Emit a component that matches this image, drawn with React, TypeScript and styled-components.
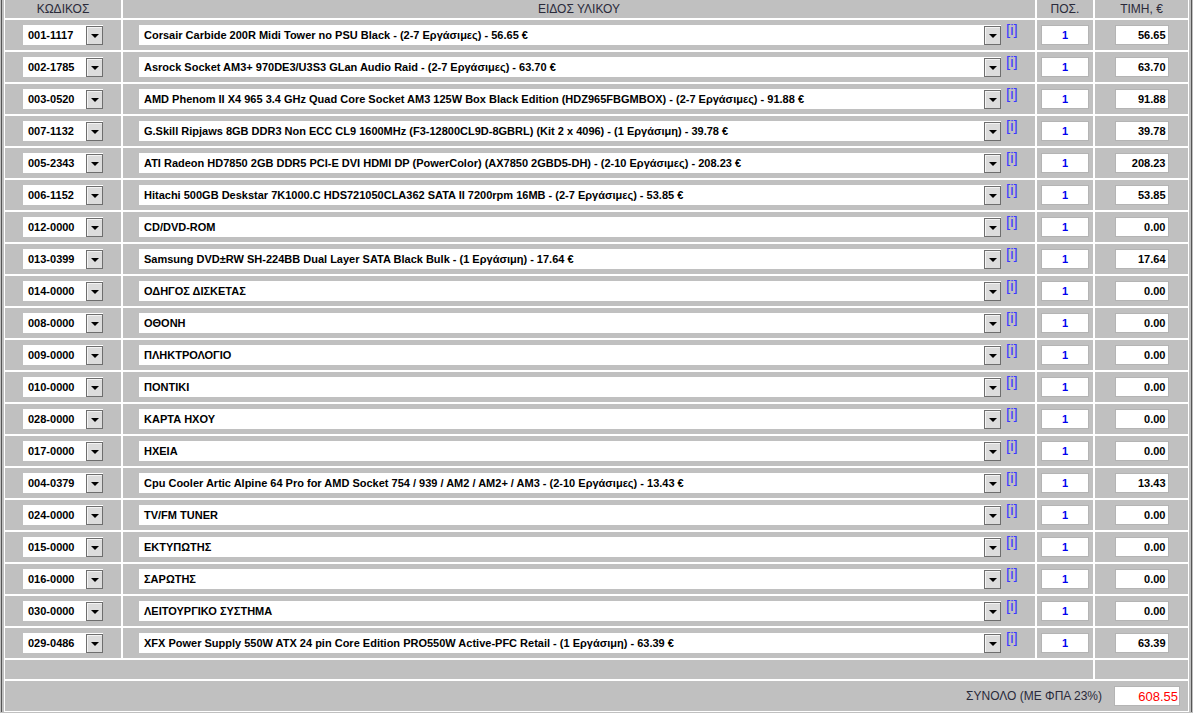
import React from "react";
import styled, { createGlobalStyle } from "styled-components";

const Global = createGlobalStyle`
  html, body { margin: 0; padding: 0; background: #c0c0c0; }
  body { font-family: "Liberation Sans", Arial, sans-serif; overflow: hidden; }
`;

const Frame = styled.div`
  margin: 0 1px;
  border-left: 1px solid #555;
  border-right: 1px solid #555;
  padding: 0 2px 1px 2px;
  height: 713px;
  box-sizing: border-box;
`;

const Table = styled.div`
  margin-top: -1px;
  background: #fff;
  padding: 1px;
  display: grid;
  grid-template-columns: 116px 912px 56px 93px;
  grid-template-rows: 18px repeat(20, 30px) 19px 30px;
  gap: 2px;
`;

const Cell = styled.div<{ $span?: number; $align?: string }>`
  background: #c0c0c0;
  display: flex;
  align-items: center;
  justify-content: ${(p) => p.$align || "center"};
  grid-column: span ${(p) => p.$span || 1};
  min-width: 0;
`;

const HeadCell = styled(Cell)`
  font-size: 12px;
  color: #2a2a3a;
`;

const Field = styled.div<{ $w: number }>`
  width: ${(p) => p.$w}px;
  height: 20px;
  background: #fff;
  display: flex;
  align-items: center;
  box-sizing: border-box;
  position: relative;
  font-size: 11px;
  font-weight: bold;
  color: #000;
  white-space: nowrap;
  overflow: hidden;
  flex: none;
`;

const FieldText = styled.span`
  padding-left: 5px;
  flex: 1;
  overflow: hidden;
`;

const DropBtn = styled.div`
  width: 17px;
  height: 19px;
  box-sizing: border-box;
  border: 1px solid #6e6e6e;
  background: #dcdcdc;
  box-shadow: inset 1px 1px 0 #f4f4f4;
  display: flex;
  align-items: center;
  justify-content: center;
  flex: none;
`;

const Tri = styled.div`
  width: 0;
  height: 0;
  border-left: 4px solid transparent;
  border-right: 4px solid transparent;
  border-top: 4px solid #000;
  margin-top: 2px;
`;

const Info = styled.span`
  align-self: flex-start;
  margin-top: 1px;
  margin-left: 5px;
  width: 13px;
  font-size: 15px;
  line-height: 17px;
  color: #3a3aff;
  white-space: nowrap;
`;

const Box = styled.div<{ $w: number; $align: string; $color: string; $bold?: boolean }>`
  width: ${(p) => p.$w}px;
  height: 20px;
  box-sizing: border-box;
  background: #fff;
  border: 1px solid #b4b4b4;
  display: flex;
  align-items: center;
  justify-content: ${(p) => p.$align};
  padding: 0 2px;
  font-size: 11px;
  font-weight: ${(p) => (p.$bold ? "bold" : "normal")};
  color: ${(p) => p.$color};
`;

const TotalLabel = styled.span`
  font-size: 12px;
  color: #2a2a3a;
  margin-right: 12px;
`;

const TotalCell = styled(Cell)`
  padding-right: 8px;
`;

const TotalBox = styled(Box)`
  font-size: 13px;
  padding-right: 1px;
`;

const rows: [string, string, string][] = [
  ["001-1117", "Corsair Carbide 200R Midi Tower no PSU Black - (2-7 Εργάσιμες) - 56.65 €", "56.65"],
  ["002-1785", "Asrock Socket AM3+ 970DE3/U3S3 GLan Audio Raid - (2-7 Εργάσιμες) - 63.70 €", "63.70"],
  ["003-0520", "AMD Phenom II X4 965 3.4 GHz Quad Core Socket AM3 125W Box Black Edition (HDZ965FBGMBOX) - (2-7 Εργάσιμες) - 91.88 €", "91.88"],
  ["007-1132", "G.Skill Ripjaws 8GB DDR3 Non ECC CL9 1600MHz (F3-12800CL9D-8GBRL) (Kit 2 x 4096) - (1 Εργάσιμη) - 39.78 €", "39.78"],
  ["005-2343", "ATI Radeon HD7850 2GB DDR5 PCI-E DVI HDMI DP (PowerColor) (AX7850 2GBD5-DH) - (2-10 Εργάσιμες) - 208.23 €", "208.23"],
  ["006-1152", "Hitachi 500GB Deskstar 7K1000.C HDS721050CLA362 SATA II 7200rpm 16MB - (2-7 Εργάσιμες) - 53.85 €", "53.85"],
  ["012-0000", "CD/DVD-ROM", "0.00"],
  ["013-0399", "Samsung DVD±RW SH-224BB Dual Layer SATA Black Bulk - (1 Εργάσιμη) - 17.64 €", "17.64"],
  ["014-0000", "ΟΔΗΓΟΣ ΔΙΣΚΕΤΑΣ", "0.00"],
  ["008-0000", "ΟΘΟΝΗ", "0.00"],
  ["009-0000", "ΠΛΗΚΤΡΟΛΟΓΙΟ", "0.00"],
  ["010-0000", "ΠΟΝΤΙΚΙ", "0.00"],
  ["028-0000", "ΚΑΡΤΑ ΗΧΟΥ", "0.00"],
  ["017-0000", "ΗΧΕΙΑ", "0.00"],
  ["004-0379", "Cpu Cooler Artic Alpine 64 Pro for AMD Socket 754 / 939 / AM2 / AM2+ / AM3 - (2-10 Εργάσιμες) - 13.43 €", "13.43"],
  ["024-0000", "TV/FM TUNER", "0.00"],
  ["015-0000", "ΕΚΤΥΠΩΤΗΣ", "0.00"],
  ["016-0000", "ΣΑΡΩΤΗΣ", "0.00"],
  ["030-0000", "ΛΕΙΤΟΥΡΓΙΚΟ ΣΥΣΤΗΜΑ", "0.00"],
  ["029-0486", "XFX Power Supply 550W ATX 24 pin Core Edition PRO550W Active-PFC Retail - (1 Εργάσιμη) - 63.39 €", "63.39"],
];

const Dropdown = ({ w, text }: { w: number; text: string }) => (
  <Field $w={w}>
    <FieldText>{text}</FieldText>
    <DropBtn>
      <Tri />
    </DropBtn>
  </Field>
);

export default function App() {
  return (
    <>
      <Global />
      <Frame>
        <Table>
          <HeadCell>ΚΩΔΙΚΟΣ</HeadCell>
          <HeadCell>ΕΙΔΟΣ ΥΛΙΚΟΥ</HeadCell>
          <HeadCell>ΠΟΣ.</HeadCell>
          <HeadCell>ΤΙΜΗ, €</HeadCell>
          {rows.map(([code, name, price]) => (
            <React.Fragment key={code}>
              <Cell>
                <Dropdown w={80} text={code} />
              </Cell>
              <Cell>
                <Dropdown w={862} text={name} />
                <Info>[i]</Info>
              </Cell>
              <Cell>
                <Box $w={48} $align="center" $color="#0000ee" $bold>
                  1
                </Box>
              </Cell>
              <Cell>
                <Box $w={54} $align="flex-end" $color="#000" $bold>
                  {price}
                </Box>
              </Cell>
            </React.Fragment>
          ))}
          <Cell $span={3} />
          <Cell />
          <TotalCell $span={4} $align="flex-end">
            <TotalLabel>ΣΥΝΟΛΟ (ΜΕ ΦΠΑ 23%)</TotalLabel>
            <TotalBox $w={66} $align="flex-end" $color="#ff0000">
              608.55
            </TotalBox>
          </TotalCell>
        </Table>
      </Frame>
    </>
  );
}
